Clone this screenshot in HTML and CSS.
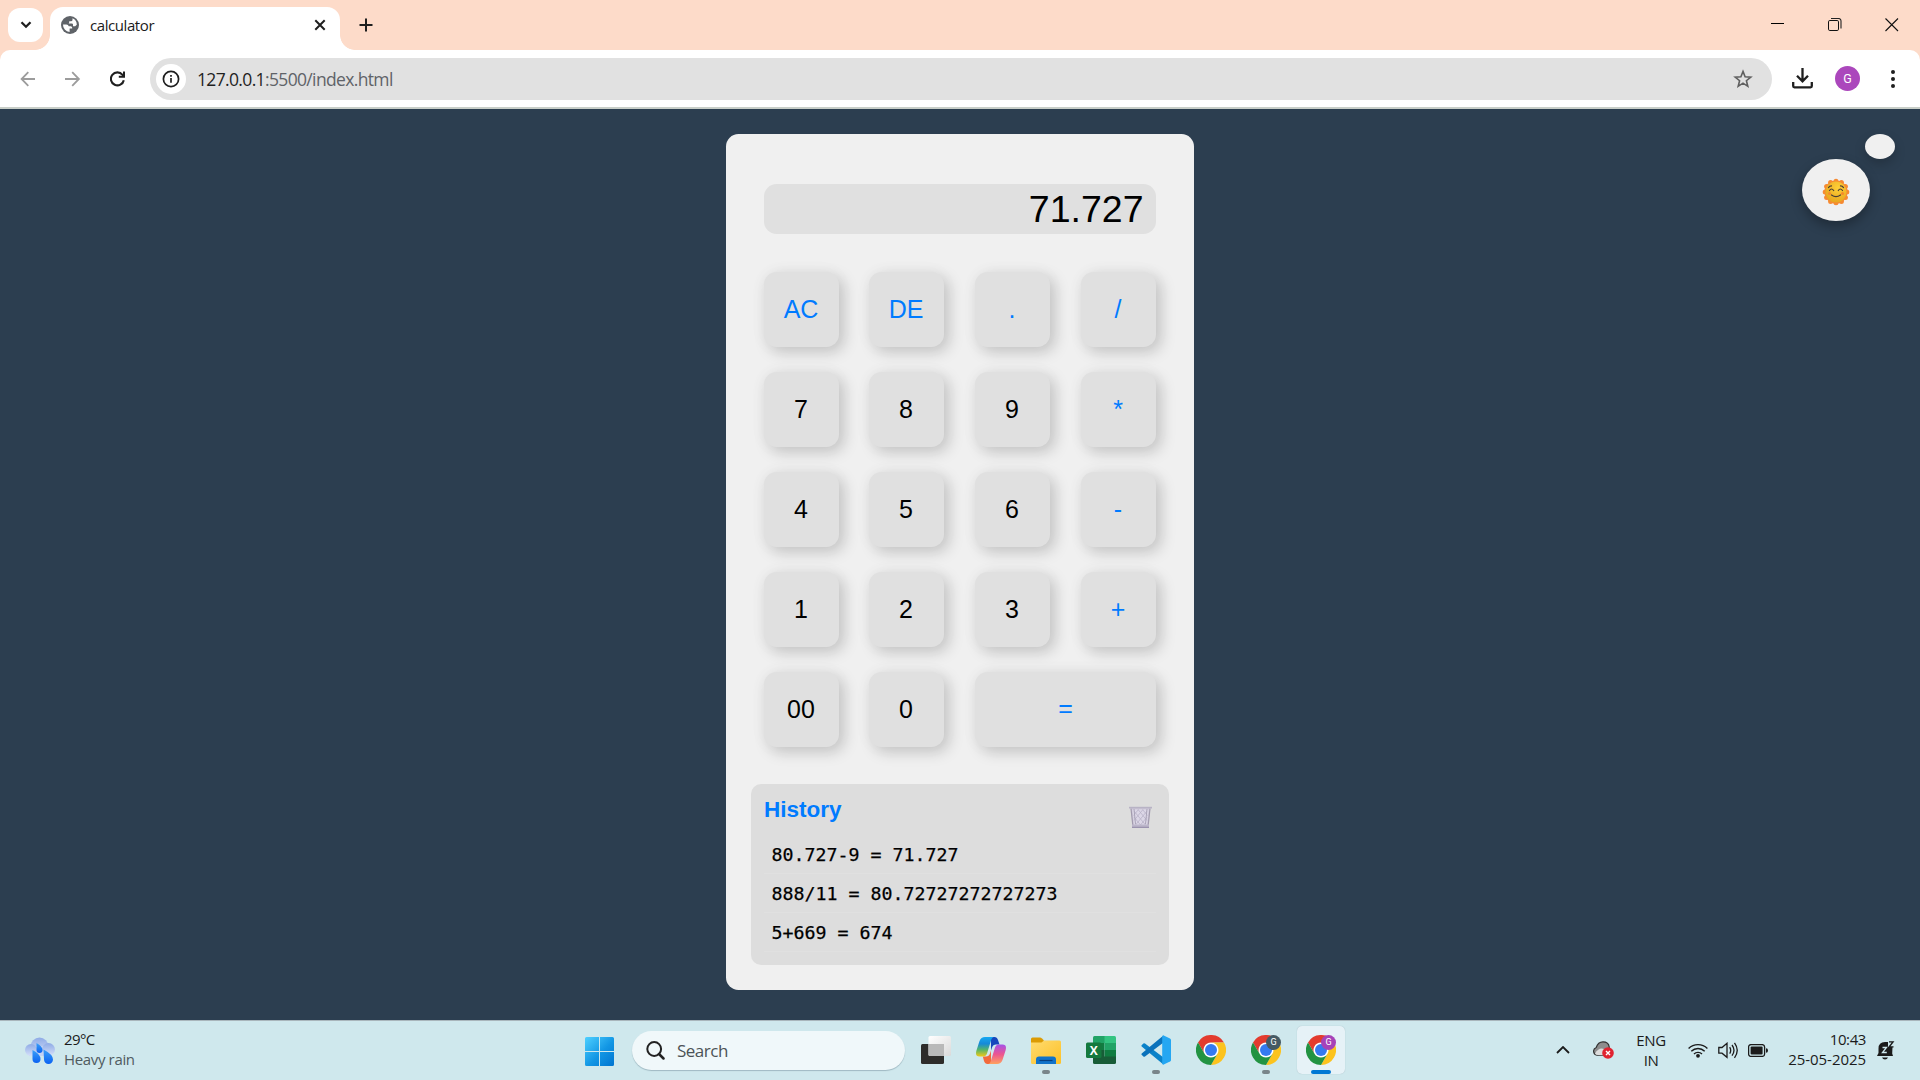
FILE: index.html
```html
<!DOCTYPE html>
<html lang="en">
<head>
<meta charset="utf-8">
<title>calculator</title>
<link rel="stylesheet" href="styles.css">
</head>
<body>
<svg class="defs" width="0" height="0">
  <defs>
    <symbol id="chrome" viewBox="0 0 48 48">
      <circle cx="24" cy="24" r="12" fill="#fff"/>
      <path d="M3.2 12A24 24 0 0 1 44.8 12H24A12 12 0 0 0 13.6 30Z" fill="#e33b2e"/>
      <path d="M44.8 12A24 24 0 0 1 24 48L34.4 30A12 12 0 0 0 24 12Z" fill="#fcc31e"/>
      <path d="M24 48A24 24 0 0 1 3.2 12L13.6 30A12 12 0 0 0 34.4 30Z" fill="#229342"/>
      <circle cx="24" cy="24" r="9.6" fill="#357af0"/>
    </symbol>
  </defs>
</svg>

<header class="tabstrip">
  <button class="tab-search"><svg width="12" height="8" viewBox="0 0 12 8"><path d="M1.500 1.200 6 5.700l4.500-4.500" fill="none" stroke="#1f1f1f" stroke-width="2.300"/></svg></button>
  <div class="tab">
    <svg class="favicon" width="18" height="18" viewBox="0 0 18 18"><circle cx="9" cy="9" r="9" fill="#5f6368"/><path d="M2 8.500h3.300q2.200 0 2.400 1.700h2q1.500 0 1.500 1.600v.8H8.600V16A7.200 7.200 0 0 1 2 8.500ZM11.500 2.300v1.500q0 1.500-1.600 1.500H8.200v1.300q0 .9-1 .9h3.600q1.200 0 1.200 1.100v1.600h2.200l1.600-1.400A7.200 7.200 0 0 0 11.500 2.300Z" fill="#fff"/></svg>
    <span class="tab-title">calculator</span>
    <svg class="tab-close" width="12" height="12" viewBox="0 0 12 12"><path d="m1.300 1.300 9.400 9.400m0-9.400-9.400 9.400" stroke="#1f1f1f" stroke-width="2"/></svg>
  </div>
  <svg class="new-tab" width="14" height="14" viewBox="0 0 14 14"><path d="M7 .5v13M.5 7h13" stroke="#1f1f1f" stroke-width="2"/></svg>
  <div class="window-controls">
    <svg width="14" height="14" viewBox="0 0 14 14"><path d="M0 5.500h13" stroke="#000"/></svg>
    <svg width="14" height="14" viewBox="0 0 14 14"><path d="M3 .5h7.500a2.500 2.500 0 0 1 2.500 2.500v7.500" fill="none" stroke="#222" stroke-width="1.100"/><rect x=".5" y="2.500" width="10" height="10" rx="1.300" fill="none" stroke="#111"/></svg>
    <svg width="14" height="14" viewBox="0 0 14 14"><path d="m.5.5 12.500 12.500M13 .5.5 13" stroke="#111" stroke-width="1.100"/></svg>
  </div>
</header>

<div class="toolbar-back">
<nav class="toolbar">
  <div class="nav-icons">
    <svg width="16" height="16" viewBox="0 0 16 16"><path d="M15 8H1.700M8.300 1.200 1.600 8l6.700 6.800" fill="none" stroke="#9c9c9c" stroke-width="1.800"/></svg>
    <svg width="16" height="16" viewBox="0 0 16 16"><path d="M0 8h13.800M7.200 1.200 13.900 8l-6.700 6.800" fill="none" stroke="#9c9c9c" stroke-width="1.800"/></svg>
    <svg width="16" height="16" viewBox="0 0 16 16"><path d="M13.800 9.200A6.500 6.500 0 1 1 12.500 3.800l1.600 1.700" fill="none" stroke="#1f1f1f" stroke-width="2.100"/><path d="M15 .5v6.300H8.800V4.800H13V.5Z" fill="#1f1f1f"/></svg>
  </div>
  <div class="omnibox">
    <span class="site-info"><svg width="18" height="18" viewBox="0 0 18 18"><circle cx="9" cy="9" r="7.600" fill="none" stroke="#1f1f1f" stroke-width="1.700"/><path d="M9 8v4.800M9 5v1.800" stroke="#1f1f1f" stroke-width="1.700"/></svg></span>
    <span class="url"><b>127.0.0.1</b>:5500/index.html</span>
    <svg class="star" width="20" height="20" viewBox="0 0 20 20"><path d="m10 2.400 2.100 5.300 5.700.4-4.400 3.600 1.400 5.600-4.800-3.100-4.800 3.100 1.400-5.600-4.400-3.600 5.700-.4Z" fill="none" stroke="#5f5f5f" stroke-width="1.600"/></svg>
  </div>
  <svg class="download" width="21" height="21" viewBox="0 0 21 21"><path d="M10.500 0v13M5 7.800l5.500 5.500L16 7.800M1.200 14v4.100q0 1.200 1.200 1.200h16.200q1.200 0 1.200-1.200V14" fill="none" stroke="#1f1f1f" stroke-width="2.300"/></svg>
  <span class="avatar">G</span>
  <svg class="menu-dots" width="4" height="18" viewBox="0 0 4 18"><g fill="#1f1f1f"><circle cx="2" cy="2" r="2"/><circle cx="2" cy="9" r="2"/><circle cx="2" cy="16" r="2"/></g></svg>
</nav>
</div>

<main class="page">
  <section class="calculator">
    <div class="display">71.727</div>
    <div class="keys">
      <button class="key op">AC</button><button class="key op">DE</button><button class="key op">.</button><button class="key op">/</button>
      <button class="key">7</button><button class="key">8</button><button class="key">9</button><button class="key op">*</button>
      <button class="key">4</button><button class="key">5</button><button class="key">6</button><button class="key op">-</button>
      <button class="key">1</button><button class="key">2</button><button class="key">3</button><button class="key op">+</button>
      <button class="key">00</button><button class="key">0</button><button class="key op equals">=</button>
    </div>
    <div class="history">
      <div class="history-head">
        <h3>History</h3>
        <svg class="trash" width="23" height="22" viewBox="0 0 23 22"><path d="M1.700 2h19.600L19.500 20h-16Z" fill="#d0cadb"/><path d="M3.500 3.500h16L18 19H5Z" fill="#dcd7e7"/><path d="m5 5 11.500 14M9 3.500l9 11M13.500 3.500l5 6M5 11l6.500 8M18 5 6.500 19M14 3.500l-9 11M9.500 3.500 4.500 9.500M18 11l-6.500 8" stroke="#b9b2c8" stroke-width=".8"/><path d="m2 2.500 1.800 16.500M21 2.500 19.200 19" stroke="#a29bae" stroke-width="1.200"/><path d="M5 3 6.500 18M18 3l-1.500 15" stroke="#aaa4b8"/><path d="M0 .8h23v1.700H0Z" fill="#b8b3c5"/><path d="M3 18.500h17v3H3Z" fill="#bcb6ca"/><path d="M3 21.300h17" stroke="#8f85a5" stroke-width="1"/></svg>
      </div>
      <ul>
        <li>80.727-9 = 71.727</li>
        <li>888/11 = 80.72727272727273</li>
        <li>5+669 = 674</li>
      </ul>
    </div>
  </section>
  <div class="theme-toggle">
    <span class="bubble"></span>
    <button class="sun"><svg width="28" height="28" viewBox="0 0 28 28">
      <defs><radialGradient id="face" cx=".6" cy=".3" r=".8"><stop offset="0" stop-color="#ffd038"/><stop offset="1" stop-color="#e3a11b"/></radialGradient></defs>
      <g fill="#f68a32"><circle cx="14" cy="14" r="11.500"/><circle cx="14" cy="3.200" r="2.500"/><circle cx="19.400" cy="4.600" r="2.500"/><circle cx="23.400" cy="8.600" r="2.500"/><circle cx="24.800" cy="14" r="2.500"/><circle cx="23.400" cy="19.400" r="2.500"/><circle cx="19.400" cy="23.400" r="2.500"/><circle cx="14" cy="24.800" r="2.500"/><circle cx="8.600" cy="23.400" r="2.500"/><circle cx="4.600" cy="19.400" r="2.500"/><circle cx="3.200" cy="14" r="2.500"/><circle cx="4.600" cy="8.600" r="2.500"/><circle cx="8.600" cy="4.600" r="2.500"/></g>
      <circle cx="14" cy="14" r="10.600" fill="url(#face)"/>
      <circle cx="7.500" cy="15.500" r="1.600" fill="#f58b2c"/><circle cx="20.500" cy="15.500" r="1.600" fill="#f58b2c"/>
      <path d="M7.500 12.500q2-3 4.200 0M16.300 12.500q2-3 4.200 0M9.500 17q4.500 3.300 9 0M6.500 9.600q1-1.700 3-1.700M18.500 7.900q2 0 3 1.700" fill="none" stroke="#493d35" stroke-width="1.200" stroke-linecap="round"/>
    </svg></button>
  </div>
</main>

<footer class="taskbar">
  <div class="weather">
    <svg width="30" height="28" viewBox="0 0 30 28">
      <defs><linearGradient id="cloud" x2="0" y2="1"><stop offset="0" stop-color="#8fabe6"/><stop offset="1" stop-color="#d5e0f9"/></linearGradient><linearGradient id="drop" x2="0" y2="1"><stop offset="0" stop-color="#3aa0f8"/><stop offset="1" stop-color="#0b62f2"/></linearGradient></defs>
      <circle cx="14.500" cy="9.500" r="9" fill="url(#cloud)"/><rect x="4" y="9" width="22" height="10" fill="#c3d2f3"/><circle cx="6" cy="13" r="6" fill="url(#cloud)"/><circle cx="23.500" cy="12.500" r="6.500" fill="url(#cloud)"/>
      <g fill="url(#drop)"><path d="M11.500 6q6 3.500 6 7a3 3 0 0 1-6 0Z"/><path d="M7.500 13q8 4 8 9a4 4 0 0 1-8 0Z"/><path d="M18.500 12.500q9.500 5 9.500 10a4.500 4.500 0 0 1-9 0Z"/></g>
    </svg>
    <div class="weather-text"><span class="temp">29°C</span><span class="sky">Heavy rain</span></div>
  </div>
  <div class="apps">
    <div class="app start"><svg width="29" height="29" viewBox="0 0 29 29"><defs><linearGradient id="win" x2="1" y2="1"><stop offset="0" stop-color="#4fd0ff"/><stop offset=".55" stop-color="#1296e4"/><stop offset="1" stop-color="#0074d0"/></linearGradient></defs><path d="M1.500 0H14v14H0V1.500Q0 0 1.500 0ZM15 0h12.500Q29 0 29 1.500V14H15ZM0 15h14v14H1.500Q0 29 0 27.500ZM15 15h14v12.500q0 1.500-1.500 1.500H15Z" fill="url(#win)"/></svg></div>
    <div class="search"><svg width="19" height="19" viewBox="0 0 19 19"><circle cx="8.200" cy="8" r="6.900" fill="none" stroke="#222" stroke-width="2"/><path d="m13 13 4.500 4.500" stroke="#222" stroke-width="2.500" stroke-linecap="round"/></svg><span>Search</span></div>
    <div class="app"><svg width="30" height="28" viewBox="0 0 30 28"><defs><linearGradient id="tvw" x2="1" y2="1"><stop offset="0" stop-color="#fff"/><stop offset="1" stop-color="#dadada"/></linearGradient></defs><rect y="8" width="23" height="20" rx="1.500" fill="#2d2c2a"/><rect x="7.500" width="22.500" height="20" rx="1.500" fill="url(#tvw)"/><path d="M7.500 8H23v12H9q-1.500 0-1.500-1.500Z" fill="#b9b9b9"/></svg></div>
    <div class="app"><svg width="30" height="27" viewBox="0 0 30 27">
      <defs><linearGradient id="cpa" x2="0" y2="1"><stop offset="0" stop-color="#16a8f1"/><stop offset=".35" stop-color="#1689d8"/><stop offset=".65" stop-color="#55b56a"/><stop offset="1" stop-color="#f2c916"/></linearGradient><linearGradient id="cpb" x2="0" y2="1"><stop offset="0" stop-color="#a552e8"/><stop offset=".5" stop-color="#ec5591"/><stop offset="1" stop-color="#ffa35f"/></linearGradient></defs>
      <path d="M15 0h3.500Q21 0 22 3l1.500 4.500H20q-3 0-4 3l-1 3Z" fill="#1647bd"/>
      <path d="M15 27h-3.500Q9 27 8 24l-1.200-4.500H10q3 0 4-3l1-3Z" fill="#f26a3c"/>
      <path d="M9 0h9q-2 0-3 3.500l-4 13Q10 19.500 7 19.500H3.500Q-1 19.500.3 14L3.500 4Q5 0 9 0Z" fill="url(#cpa)"/>
      <path d="M21 27h-9q2 0 3-3.500l4-13Q20 7.500 23 7.500h3.500Q31 7.500 29.700 13l-3.200 10Q25 27 21 27Z" fill="url(#cpb)"/>
    </svg></div>
    <div class="app running"><svg width="30" height="27" viewBox="0 0 30 27"><defs><linearGradient id="fold" x2="1" y2="1"><stop offset="0" stop-color="#ffdb70"/><stop offset="1" stop-color="#fdc127"/></linearGradient></defs><path d="M0 2Q0 .5 1.500.5H9q1 0 2 1L13 3.500V8H0Z" fill="#dc9b04"/><path d="M0 5.500h10.500L13 3.500h15.500Q30 3.500 30 5v20.500Q30 27 28.500 27h-27Q0 27 0 25.500Z" fill="url(#fold)"/><path d="M5 27v-4.500Q5 19.500 8 19.500h14q3 0 3 3V27Z" fill="#1173c9"/><path d="M8.500 23.500h13" stroke="#063f80" stroke-width="1.200"/></svg></div>
    <div class="app"><svg width="30" height="28" viewBox="0 0 30 28"><path d="M8.500 0H19v7H7V1.500Q7 0 8.500 0Z" fill="#21a366"/><path d="M18.500 0h10Q30 0 30 1.500V7H18.500Z" fill="#33c481"/><path d="M7 7h11.500v7H7Z" fill="#107c41"/><path d="M18.500 7H30v7H18.500Z" fill="#21a366"/><path d="M7 14h11.500v7H7Z" fill="#185c37"/><path d="M18.500 14H30v7H18.500Z" fill="#107c41"/><path d="M7 20.500h23V26.500Q30 28 28.500 28h-20Q7 28 7 26.500Z" fill="#185c37"/><rect y="6.500" width="15.500" height="15.500" rx="1.500" fill="#14793e"/><text class="excel-x" x="7.700" y="18.600" text-anchor="middle">X</text></svg></div>
    <div class="app running"><svg width="30" height="30" viewBox="0 0 30 30"><path d="M.6 10.200 2.400 8.500q.7-.6 1.600 0L22.500 22.500v6.800q-.6-.2-1-.6L.7 11.600q-.6-.7-.1-1.400Z" fill="#0a82c9"/><path d="M.6 19.800 2.400 21.500q.7.600 1.600 0L22.500 7.500V.7q-.6.200-1 .6L.7 18.400q-.6.700-.1 1.400Z" fill="#0a72bb"/><path d="M22.200 29.800q-1-.2-1-1.200V1.400q0-1 1-1.200l6.800 3.200q1 .5 1 1.500v20.200q0 1-1 1.500Z" fill="#25a7f2"/></svg></div>
    <div class="app"><svg width="30" height="30"><use href="#chrome"/></svg></div>
    <div class="app running"><svg width="30" height="30"><use href="#chrome"/></svg><span class="profile gray">G</span></div>
    <div class="app active"><svg width="30" height="30"><use href="#chrome"/></svg><span class="profile">G</span></div>
  </div>
  <div class="tray">
    <svg class="chevron" width="14" height="8" viewBox="0 0 14 8"><path d="m1 7 6-6 6 6" fill="none" stroke="#1b1b1b" stroke-width="1.800"/></svg>
    <svg class="onedrive" width="21" height="18" viewBox="0 0 21 18"><path d="M4 14.200A4 4 0 0 1 3.200 6.500Q5 .8 10 .8q5.500 0 6.200 5V14Z" fill="#8d8d8d" stroke="#333" stroke-width="1.200"/><path d="M2 12.500Q6 6 11 8l3 6H5q-2.300 0-3-1.500Z" fill="#ddd"/><circle cx="15" cy="12" r="5.800" fill="#e02330"/><path d="m13 10 4 4m0-4-4 4" stroke="#fff" stroke-width="1.400"/></svg>
    <div class="lang"><span>ENG</span><span>IN</span></div>
    <svg class="wifi" width="20" height="15" viewBox="0 0 20 15"><g fill="none" stroke="#1b1b1b" stroke-width="1.400"><path d="M.6 5.500a13.300 13.300 0 0 1 18.800 0M3.300 8.300a9.500 9.500 0 0 1 13.400 0M6 11a5.700 5.700 0 0 1 8 0"/></g><circle cx="10" cy="12.800" r="1.900" fill="#1b1b1b"/></svg>
    <svg class="volume" width="21" height="17" viewBox="0 0 21 17"><path d="M.8 5.500H4L9 1.300v14L4 11.200H.8ZM11.700 5.200q2 3.200 0 6.400M14 3q4 5.300 0 10.700M16.500.8q5.500 7.500 0 15" fill="none" stroke="#1b1b1b" stroke-width="1.300"/></svg>
    <svg class="battery" width="20" height="13" viewBox="0 0 20 13"><rect x=".6" y=".6" width="16" height="11.800" rx="2.500" fill="none" stroke="#1b1b1b" stroke-width="1.300"/><rect x="2.600" y="2.600" width="12" height="7.800" rx="1" fill="#1b1b1b"/><path d="M18 4.300q2 0 2 2.200t-2 2.200Z" fill="#1b1b1b"/></svg>
    <div class="clock"><span class="time">10:43</span><span class="date">25-05-2025</span></div>
    <svg class="bell" width="18" height="19" viewBox="0 0 18 19"><path d="M1.500 7.500Q1.500 1 8 1h3v5h4.500l-.3 6.500L16 15H0l1.500-3Z" fill="#1b1b1b"/><path d="M5 16.500h6q-.8 2-3 2t-3-2Z" fill="#1b1b1b"/><path d="M5.500 6.500h4l-4 5h4.300" fill="none" stroke="#cfe8ed" stroke-width="1.300"/><path d="M12 .9h4l-3.800 5h4.300" fill="none" stroke="#1b1b1b" stroke-width="1.400"/></svg>
  </div>
</footer>
</body>
</html>
```
FILE: styles.css
```css
* { box-sizing: border-box; }
body {
  margin: 0;
  width: 1920px;
  height: 1080px;
  overflow: hidden;
  display: flex;
  flex-direction: column;
  font-family: "Open Sans", "Noto Sans", sans-serif;
  color: #1b1b1b;
}
button { border: 0; padding: 0; font: inherit; }
svg { display: block; flex: none; }
.defs { position: absolute; }

/* Tab strip */
.tabstrip {
  height: 50px;
  display: flex;
  flex: none;
  background: #fddbc9;
  padding-left: 8px;
}
.tab-search {
  width: 35px;
  height: 34px;
  margin-top: 8px;
  border-radius: 12px;
  background: #fff;
  display: flex;
  align-items: center;
  justify-content: center;
}
.tab {
  position: relative;
  width: 290px;
  height: 43px;
  margin: 7px 0 0 7px;
  padding: 0 14px 7px 11px;
  background: #fff;
  border-radius: 13px 13px 0 0;
  display: flex;
  align-items: center;
}
.tab::before, .tab::after {
  content: "";
  position: absolute;
  bottom: 0;
  width: 15px;
  height: 15px;
}
.tab::before { left: -15px; background: radial-gradient(circle at 0 0, transparent 14.5px, #fff 15.2px); }
.tab::after { right: -15px; background: radial-gradient(circle at 100% 0, transparent 14.5px, #fff 15.2px); }
.tab-title { margin-left: 11px; font-size: 15px; letter-spacing: -.42px; flex: 1; }
.new-tab { margin: 18px 0 0 18.5px; }
.window-controls { margin: 18px 21px 0 auto; display: flex; gap: 43px; }

/* Toolbar */
.toolbar-back { background: #fddbc9; flex: none; }
.toolbar {
  height: 59px;
  display: flex;
  align-items: center;
  background: #fff;
  border-radius: 10px 10px 0 0;
  border-bottom: 2px solid #c8cec8;
  padding-left: 20px;
}
.nav-icons { display: flex; gap: 29px; width: 130px; }
.omnibox {
  width: 1622px;
  height: 42px;
  border-radius: 21px;
  background: #e1e1e1;
  display: flex;
  align-items: center;
  padding: 0 19px 0 6px;
}
.site-info {
  width: 30px;
  height: 30px;
  border-radius: 50%;
  background: #fff;
  display: flex;
  align-items: center;
  justify-content: center;
}
.url { margin-left: 11px; flex: 1; font-size: 17.5px; letter-spacing: -.65px; color: #5f6368; }
.url b { font-weight: 400; color: #1f1f1f; }
.download { margin-left: 20px; }
.avatar {
  width: 25px;
  height: 25px;
  margin-left: 22px;
  border-radius: 50%;
  background: #ab47bc;
  color: #fff;
  font: 12.5px/26px Roboto, sans-serif;
  text-align: center;
}
.menu-dots { margin-left: 31px; }

/* Page */
.page {
  position: relative;
  height: 911px;
  flex: none;
  background: #2c3e50;
  display: flex;
  justify-content: center;
  align-items: flex-start;
  padding-top: 25px;
  font-family: "Liberation Sans", Arial, sans-serif;
}
.calculator {
  width: 468px;
  height: 856px;
  padding: 50px 25px 25px;
  background: #f0f0f0;
  border-radius: 12.5px;
}
.display {
  height: 50px;
  margin: 0 13px;
  padding-right: 12.5px;
  border-radius: 12.5px;
  background: #e0e0e0;
  color: #000;
  font-size: 37.5px;
  line-height: 50px;
  text-align: right;
}
.keys {
  margin: 38px 13px 0;
  display: grid;
  grid-template-columns: 105px 106px 106px 75px;
  row-gap: 25px;
}
.key {
  width: 75px;
  height: 75px;
  padding-right: 1px;
  border-radius: 12.5px;
  background: #e0e0e0;
  color: #000;
  font-size: 25px;
  box-shadow: 5px 5px 15px rgba(0, 0, 0, .18), 0 0 19px rgba(0, 0, 0, .03);
}
.op { color: #007bff; }
.equals { grid-column: span 2; width: 181px; padding: 0 0 2px; }
.history {
  height: 181px;
  margin-top: 37px;
  padding: 13px 13px 0;
  border-radius: 10px;
  background: #ddd;
}
.history-head { display: flex; justify-content: space-between; height: 38px; }
.history h3 { margin: 0; font-size: 22.5px; line-height: 26px; color: #007bff; }
.trash { margin: 9px 4px 0 0; }
.history ul { list-style: none; margin: 0; padding: 0; }
.history li {
  height: 39px;
  padding-left: 7.5px;
  border-bottom: 1px solid #e0e0e0;
  color: #000;
  -webkit-text-stroke: .25px #000;
  font: 18.28px/39px "DejaVu Sans Mono", monospace;
}

/* Floating theme switch */
.theme-toggle {
  position: absolute;
  top: 25px;
  right: 25px;
  width: 93px;
  display: flex;
  flex-direction: column;
}
.bubble {
  width: 30px;
  height: 25px;
  align-self: flex-end;
  border-radius: 50%;
  background: #f0f0f0;
  box-shadow: 0 5px 12px rgba(0, 0, 0, .2);
}
.sun {
  width: 68px;
  height: 62px;
  border-radius: 50%;
  background: #f0f0f0;
  box-shadow: 0 5px 12px rgba(0, 0, 0, .3);
  display: flex;
  align-items: center;
  justify-content: center;
  padding-top: 4px;
}

/* Taskbar */
.taskbar {
  height: 60px;
  flex: none;
  display: flex;
  background: #cfe8ed;
  border-top: 1px solid #a9b6bc;
}
.weather { width: 572px; padding: 0 0 0 25px; display: flex; }
.weather svg { margin-top: 16px; }
.weather-text { margin: 8px 0 0 9px; display: flex; flex-direction: column; font-size: 15px; line-height: 20px; letter-spacing: -.6px; }
.sky { color: #4f5b60; letter-spacing: -.35px; }
.apps { display: flex; align-items: center; padding-bottom: 1px; }
.app {
  position: relative;
  width: 55px;
  height: 48px;
  display: flex;
  align-items: center;
  justify-content: center;
}
.start { padding-top: 2px; }
.search {
  width: 273px;
  height: 39px;
  margin: 0 3px 0 5px;
  padding-left: 14px;
  border-radius: 20px;
  background: #f0f8fa;
  box-shadow: 0 1px 1px #9fb9c2;
  display: flex;
  align-items: center;
}
.search span { margin-left: 12px; font-size: 17px; letter-spacing: -.5px; color: #4c5356; }
.excel-x { font: 700 12px "Open Sans", sans-serif; fill: #fff; }
.running::after, .active::after {
  content: "";
  position: absolute;
  left: 50%;
  bottom: 0;
  width: 8px;
  height: 4px;
  margin-left: -4px;
  border-radius: 2px;
  background: #79858a;
}
.active::after { width: 20px; margin-left: -10px; background: #0078d4; }
.active { width: 48px; margin-left: 4px; background: #e6f2f7; border-radius: 5px; box-shadow: 0 0 1px #9db5bd; }
.profile {
  position: absolute;
  right: 9px;
  top: 9px;
  width: 15px;
  height: 15px;
  border-radius: 50%;
  background: #a642b8;
  color: #fff;
  font: 9px/15px Roboto, sans-serif;
  text-align: center;
}
.gray { right: 12px; background: #455a64; }

.tray { margin-left: auto; padding: 0 25px 1px 0; display: flex; align-items: center; font-size: 15px; line-height: 20px; letter-spacing: -.4px; }
.tray span { display: block; }
.chevron { margin-right: 23px; }
.onedrive { margin-right: 21px; }
.lang { width: 32px; text-align: center; margin-right: 21px; }
.wifi { margin-right: 10px; }
.volume { margin-right: 9px; }
.clock { width: 98px; text-align: right; margin: -2px 11px 0 0; }
.date { letter-spacing: -.05px; }
```
